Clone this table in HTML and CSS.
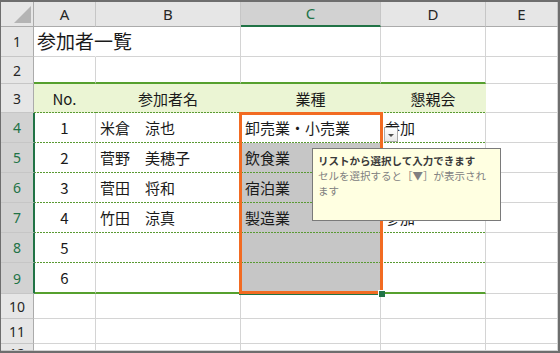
FILE: index.html
```html
<!DOCTYPE html>
<html lang="ja">
<head>
<meta charset="utf-8">
<title>参加者一覧</title>
<link rel="stylesheet" href="styles.css">
</head>
<body>
<div class="sheet">
  <div class="grid">
    <!-- column headings -->
    <div class="corner"><span class="tri"></span></div>
    <div class="ch">A</div>
    <div class="ch">B</div>
    <div class="ch sel">C</div>
    <div class="ch">D</div>
    <div class="ch">E</div>

    <!-- row 1 -->
    <div class="rh">1</div>
    <div class="c title">参加者一覧</div>
    <div class="c"></div><div class="c"></div><div class="c"></div><div class="c"></div>

    <!-- row 2 -->
    <div class="rh">2</div>
    <div class="c tt"></div><div class="c tt"></div><div class="c tt"></div><div class="c tt"></div><div class="c"></div>

    <!-- row 3: table header -->
    <div class="rh">3</div>
    <div class="c th ctr">No.</div>
    <div class="c th ctr">参加者名</div>
    <div class="c th ctr">業種</div>
    <div class="c th ctr">懇親会</div>
    <div class="c"></div>

    <!-- row 4 -->
    <div class="rh sel">4</div>
    <div class="c dt ctr">1</div>
    <div class="c dt">米倉　涼也</div>
    <div class="c dt">卸売業・小売業</div>
    <div class="c dt">参加</div>
    <div class="c"></div>

    <!-- row 5 -->
    <div class="rh sel">5</div>
    <div class="c dt ctr">2</div>
    <div class="c dt">菅野　美穂子</div>
    <div class="c dt hl">飲食業</div>
    <div class="c dt">参加</div>
    <div class="c"></div>

    <!-- row 6 -->
    <div class="rh sel">6</div>
    <div class="c dt ctr">3</div>
    <div class="c dt">菅田　将和</div>
    <div class="c dt hl">宿泊業</div>
    <div class="c dt">参加</div>
    <div class="c"></div>

    <!-- row 7 -->
    <div class="rh sel">7</div>
    <div class="c dt ctr">4</div>
    <div class="c dt">竹田　涼真</div>
    <div class="c dt hl">製造業</div>
    <div class="c dt">参加</div>
    <div class="c"></div>

    <!-- row 8 -->
    <div class="rh sel">8</div>
    <div class="c dt ctr">5</div>
    <div class="c dt"></div>
    <div class="c dt hl"></div>
    <div class="c dt"></div>
    <div class="c"></div>

    <!-- row 9 -->
    <div class="rh sel">9</div>
    <div class="c tb ctr">6</div>
    <div class="c tb"></div>
    <div class="c tb hl"></div>
    <div class="c tb"></div>
    <div class="c"></div>

    <!-- rows 10-12 -->
    <div class="rh">10</div>
    <div class="c"></div><div class="c"></div><div class="c"></div><div class="c"></div><div class="c"></div>
    <div class="rh">11</div>
    <div class="c"></div><div class="c"></div><div class="c"></div><div class="c"></div><div class="c"></div>
    <div class="rh cut">12</div>
    <div class="c"></div><div class="c"></div><div class="c"></div><div class="c"></div><div class="c"></div>
  </div>

  <!-- highlighted range, fill handle, list button and input message -->
  <div class="pick"></div>
  <div class="handle"></div>
  <div class="drop"><span class="arrow"></span></div>
  <div class="tip">
    <div class="tip-title">リストから選択して入力できます</div>
    <div class="tip-body">セルを選択すると［▼］が表示され<br>ます</div>
  </div>
</div>
</body>
</html>
```

FILE: styles.css
```css
* { box-sizing: border-box; }

html, body {
  margin: 0;
  padding: 0;
  background: #ffffff;
}

.sheet {
  position: relative;
  width: 560px;
  height: 353px;
  border: 2px solid #6e6e6e;
  border-left-width: 1px;
  overflow: hidden;
  background: #ffffff;
  font-family: "Noto Sans CJK JP", "Noto Sans", sans-serif;
  color: #1a1a1a;
}

.grid {
  display: grid;
  grid-template-columns: 33px 62px 145px 140px 105px 1fr;
  grid-template-rows: 25px 30px 27px 29px 30px 30px 30px 30px 30px 31px 25px 25px 1fr;
  height: 100%;
}

/* headings */
.corner {
  position: relative;
  background: #e6e6e6;
  border-right: 1px solid #ababab;
  border-bottom: 1px solid #ababab;
}
.tri {
  position: absolute;
  right: 2px;
  bottom: 3px;
  width: 17px;
  height: 17px;
  background: #b4b4b4;
  clip-path: polygon(100% 0, 100% 100%, 0 100%);
}

.ch {
  display: flex;
  align-items: center;
  justify-content: center;
  background: #e6e6e6;
  border-right: 1px solid #c6c6c6;
  border-bottom: 1px solid #ababab;
  font-family: "Noto Sans", "Liberation Sans", sans-serif;
  font-size: 15px;
  color: #262626;
  padding-bottom: 1px;
}
.ch.sel {
  background: #d2d2d2;
  color: #217346;
  border-bottom: 2px solid #217346;
}

.rh {
  display: flex;
  align-items: center;
  justify-content: center;
  background: #e6e6e6;
  border-right: 1px solid #ababab;
  border-bottom: 1px solid #c6c6c6;
  font-family: "Noto Sans", "Liberation Sans", sans-serif;
  font-size: 14px;
  color: #262626;
  overflow: hidden;
}
.rh.sel {
  background: #d2d2d2;
  color: #217346;
  border-right: 2px solid #217346;
  margin-right: -1px;
  position: relative;
  z-index: 1;
}
.rh.cut {
  align-items: flex-start;
  line-height: 19px;
}

/* cells */
.c {
  display: flex;
  align-items: center;
  padding: 0 4px 1px;
  border-right: 1px solid #d4d4d4;
  border-bottom: 1px solid #d4d4d4;
  font-size: 15px;
  white-space: nowrap;
  overflow: visible;
  min-width: 0;
}
.ctr { justify-content: center; }

.title {
  font-size: 19px;
  border-right-color: transparent;
  padding-left: 3px;
  padding-bottom: 3px;
}

/* table borders */
.tt { border-bottom: 2px solid #56a02e; }

.th {
  background-color: #ebf5d4;
  border-right-color: transparent;
  border-bottom: none;
  background-image: linear-gradient(to right, #5a9a33 2px, transparent 2px);
  background-size: 3px 1px;
  background-repeat: repeat-x;
  background-position: left bottom;
}

.dt {
  border-bottom: none;
  background-image: linear-gradient(to right, #5a9a33 2px, transparent 2px);
  background-size: 3px 1px;
  background-repeat: repeat-x;
  background-position: left bottom;
}

.tb { border-bottom: 2px solid #56a02e; }

.hl { background-color: #c6c6c6; }

/* overlays */
.pick {
  position: absolute;
  left: 238px;
  top: 110px;
  width: 144px;
  height: 182px;
  border: 3px solid #f26b22;
  box-shadow: 0 1px 0 #217346;
}

.handle {
  position: absolute;
  left: 377px;
  top: 288px;
  width: 7px;
  height: 7px;
  background: #217346;
  border-top: 1px solid #ffffff;
  border-left: 1px solid #ffffff;
}

.drop {
  position: absolute;
  left: 383px;
  top: 125px;
  width: 14px;
  height: 15px;
  background: linear-gradient(#ffffff, #e9e9e9);
  border: 1px solid #a9a9a9;
  display: flex;
  align-items: center;
  justify-content: center;
}
.arrow {
  width: 0;
  height: 0;
  border-left: 3px solid transparent;
  border-right: 3px solid transparent;
  border-top: 3px solid #505050;
  margin-top: 1px;
}

.tip {
  position: absolute;
  left: 311px;
  top: 146px;
  width: 189px;
  height: 73px;
  background: #ffffe1;
  border: 1px solid #7a7a7a;
  padding: 4px 6px 0 5px;
  font-size: 10.5px;
  line-height: 15px;
  white-space: nowrap;
}
.tip-title {
  font-weight: 700;
  color: #3a3a3a;
}
.tip-body {
  color: #808080;
}
```
